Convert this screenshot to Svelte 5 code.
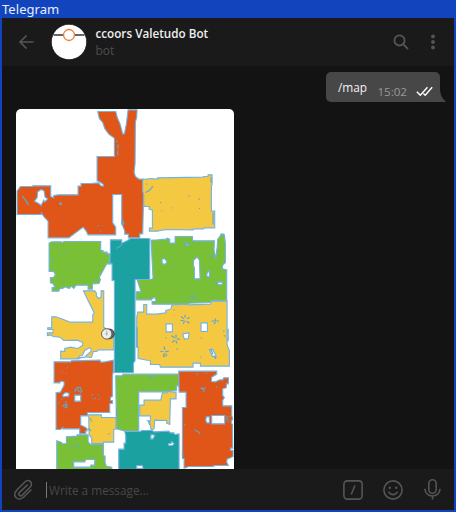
<script>
  // Every room is traced on a 3x grid whose corner sits at (ox, oy) of the window.
  const red = '#df5618', green = '#79c036', yellow = '#f5c842', teal = '#1aa1a0', white = '#fff';
  const rooms = [
    { ox: 10, oy: 170, fill: teal, d: 'M300 208H334V218L350 211 360 204H418V327H374V570L369 578V606H312V330H305V280H298V250H300Z' },
    { ox: 10, oy: 170, fill: red, d: 'M262-177H316L321-158 329-140 337-110H342L348-140 353-182H380L379-160 375-145 374-20 371 5 375 18 386 26H399V100L397 190H388V202H354V191H343V182L334 158V72H307V157L316 170V193H233L227 181 218 170 175 202H113V152L100 138 93 127V132H20V62L30 48H67V46H121V78L130 82V75L145 73H203V47H212V39H240L265 37 271 46 279 47 278 41 266 33 260 31V-42H312V-97L295-109 283-126 277-144 267-155ZM82 64 92 57 101 61 104 80 112 85 103 94 100 89 92 105 85 99 72 92 80 82Z' },
    { ox: 10, oy: 170, fill: green, d: 'M116 218 123 214H153L156 217 160 213H271V240H278V245H290V250H298V280H289L278 300 267 320 270 328 266 339 246 340V356H233V344H197L190 354 183 347 176 354 164 349 157 354 149 353 145 362H125V351H133L129 340 120 337V321H129L135 313 130 303H116Z' },
    { ox: 120, oy: 104, fill: yellow, d: 'M67 225 91 222 112 224V220L248 218 250 216H263V211H275V240L273 245V320H283V370H252L250 373H220L218 376 137 375 110 380H87V371H96V317L86 314V306H73L70 299V270L67 260Z' },
    { ox: 120, oy: 230, fill: green, d: 'M92 29 112 28 137 26 140 23 148 26V38H164V18H216L217 31H282L281 60 286 83 290 53 292 26 302 13H312L315 40V96L306 105V115L319 118V211H271V216L204 218V221H95V213H106V202H97L93 208H47V184H62L50 147H92L98 144Z' },
    { ox: 120, oy: 230, fill: yellow, d: 'M70 222H79V251H108L136 247V240L151 236 155 223 200 221 204 223 271 221V213L320 211V343L327 360V407H240V398H218V410H120L118 402H90V391L53 384V350H49V260L52 245H70Z' },
    { ox: 10, oy: 280, fill: yellow, d: 'M219 31H253L258 38V47L265 54 272 50V31H280V140L290 147 310 173V208H264L259 213H249L243 231 213 228 205 235H151V212L163 213V204L181 200 202 204 217 194V185L209 183 202 179 160 180 149 170 127 168 123 163 111 165V157H128V147H112V142H124V109H136L159 117 180 125H247V103L252 98 237 68Z' },
    { ox: 10, oy: 355, fill: red, d: 'M131 19H181L183 16 269 14 271 20 284 19 309 14V48L306 60V123L300 126V135H306V144H298V171H231V181H211V209L220 213 230 219V226H226V234H208V220H157V216L150 222H137V112L150 110 161 89V79L151 77 148 82H131Z' },
    { ox: 10, oy: 355, fill: yellow, d: 'M235 178H273V186H317V220L310 223V260H279V264H244V248L236 238Z' },
    { ox: 10, oy: 355, fill: green, d: 'M139 256 152 260 158 265 168 264V244L200 242V238H233V260L241 267 279 266 279 300 284 302V322L288 332 304 335V345H139Z' },
    { ox: 110, oy: 355, fill: green, d: 'M16 61H37V56H205V91H198V105L158 109H85V227H45L18 220Z' },
    { ox: 110, oy: 355, fill: yellow, d: 'M88 149H101V134H151L156 112H170V107L188 110H197V130L180 130 178 207 169 203V195L133 194 131 220 122 222 118 200 112 196H120V181H88Z' },
    { ox: 110, oy: 355, fill: teal, d: 'M43 228H90L94 225H126L130 229 175 227 180 232H190L193 237 206 235V345H25V281H41V263H46V240Z' },
    { ox: 110, oy: 355, fill: red, d: 'M205 47H319V56L304 65 303 78 315 79 328 73H337L340 67H354V85H348V96L337 100V120L342 126 337 134V151H364V180L367 190 362 201 366 207 367 278H360V284L368 285V303L350 311 349 320 354 330H310V333H235L221 338V309H216V156H227V110H206Z' },

    // Free-standing gaps inside the rooms
    { ox: 120, oy: 230, fill: white, d: 'M125 86 132 84 140 94 134 102 125 98ZM220 89 230 80 237 89 239 145H222V112L219 104ZM261 126 267 121V140L258 136ZM290 155 307 155 304 163 293 162ZM193 36 207 42 200 45ZM137 280H156V304H137ZM242 277H261V303H242ZM187 310 206 307 204 324 192 326ZM267 357 276 356 285 371 287 380 276 377Z' },
    { ox: 10, oy: 355, fill: white, d: 'M193 119H211V137H193ZM157 118 165 111 176 113 175 122 158 124ZM188 319H223L226 312H253V329H241V335H190V326Z' },
    { ox: 110, oy: 355, fill: white, d: 'M304 180H343V205H304ZM288 184H297V202H289L286 194ZM122 237 133 239 128 250H121ZM174 264H182L183 258 191 264 186 270H175ZM79 330H96L98 339H79Z' },
    { ox: 10, oy: 280, fill: white, d: 'M202 233 208 226 216 225 223 210 236 202 242 205V213L232 221 223 230Z' }
  ];

  // Thin outlines of furniture and scanning noise
  const traces = [
    { ox: 10, oy: 104, d: 'M319 108V113M323 120V133M322 138V153' },
    { ox: 10, oy: 170, d: 'M36 77 47 91 55 104M318 234 336 222M335 154H340V163M148 98H153V102H148ZM262 166H265M275 165H277M270 182H273M126 260V271M141 230V233M158 245 163 248M168 249H171M190 296H194M173 293V296M254 324H257M160 320V323' },
    { ox: 120, oy: 104, d: 'M75 264 87 258 98 245M77 239H80M119 294H123M204 274H208M234 284H238M236 312H239M156 310H158M123 319H125M278 325V360M272 218V235M300 389H310M5 350V362' },
    { ox: 120, oy: 230, d: 'M182 258 190 265M194 253V262M200 265 208 260M180 270H190M198 272 207 278M188 280 193 271M274 272H283M285 264V272M288 272 295 271M281 281 286 275M153 316 163 322M167 312V323M170 326H178M155 335 163 329M166 330 170 339M130 348 134 358M120 363H129M134 364 145 362M128 378 133 368M136 370 140 376M266 77H271M276 74 284 79M277 68H279M289 61H292M208 198H216M220 188V195M222 200 230 204M213 207 219 202M160 109H163M161 237V240M241 322H244M308 302H312M310 316H315M323 295V332M168 356H172M240 380H243M50 290V350M137 320V323M283 156 292 160M191 44 196 38M203 36V44M271 356 278 371' },
    { ox: 10, oy: 355, d: 'M194 110 195 102 201 96 210 97 214 106 210 112M200 103 208 109M155 152 163 148M168 137 165 148M165 150 173 147M160 157 168 153M169 151V159M144 143H147M153 132H156M243 118H247M254 128H257M262 118H265M264 131H267M248 131H251M171 36H173M154 49H157M166 54H169M182 271H188M203 269V277M195 274H200M241 188V195M244 198H247M295 233V237M233 220 242 226' },
    { ox: 110, oy: 355, d: 'M270 98 280 102M276 95 282 109M281 100 286 96M319 93V97M347 190H354M350 181V187M352 194V200M356 183H359M360 193V196M253 223 261 228M263 227 268 235M221 208H225M116 64 123 68 128 64M158 0 165 4M19 158V183M114 197 118 208M217 285V307M310 0 316 10M258 55 262 57M286 52 290 54' }
  ];
</script>

<main class="window">
  <div class="titlebar">Telegram</div>
  <div class="chat">
    <header>
      <svg class="back" width="16" height="16" viewBox="0 0 16 16"><path d="M15.5 8H2M8.5 1.5 2 8 8.5 14.5" /></svg>
      <svg class="avatar" width="36" height="36" viewBox="0 0 36 36">
        <circle cx="18" cy="18" r="17.7" fill="#fff" stroke="#0b0b0b" stroke-width=".7" />
        <path d="M2.5 11H33.5" stroke="#111" stroke-width="1.3" />
        <circle cx="18" cy="11" r="5.5" fill="#fff" stroke="#ef7d35" stroke-width="1.3" />
      </svg>
      <div class="who">
        <div class="name">ccoors Valetudo Bot</div>
        <div class="status">bot</div>
      </div>
      <svg class="search" width="16" height="16" viewBox="0 0 16 16"><circle cx="6.5" cy="6.4" r="5.1" /><path d="M10.2 10.2 15 15" /></svg>
      <svg class="more" width="4" height="16" viewBox="0 0 4 16"><circle cx="2" cy="2.4" r="1.9" /><circle cx="2" cy="8" r="1.9" /><circle cx="2" cy="13.5" r="1.9" /></svg>
    </header>

    <section class="messages">
      <div class="outgoing">
        <span class="text">/map</span>
        <span class="time">15:02</span>
        <svg class="checks" width="17" height="11" viewBox="0 0 17 11"><path d="M.8 5.7 4.3 9.3 11.5 1.2M7.4 7.5 9.2 9.3 16.2 1.2" /></svg>
        <svg class="tail" width="6" height="12" viewBox="0 0 6 12"><path d="M0 0Q.7 8 5.8 11.4L5.5 12H0Z" /></svg>
      </div>
      <div class="photo">
        <svg width="218" height="360" viewBox="15.6 108.5 218 360">
          {#each rooms as room}
            <g transform="translate({room.ox} {room.oy}) scale(.33333)">
              <path class="room" d={room.d} fill={room.fill} />
            </g>
          {/each}
          {#each traces as trace}
            <g transform="translate({trace.ox} {trace.oy}) scale(.33333)">
              <path class="trace" d={trace.d} />
            </g>
          {/each}
          <circle cx="109" cy="333.4" r="4.9" fill="#666" stroke="#333" stroke-width=".8" />
          <circle cx="106.3" cy="333.4" r="5.2" fill="#eee" stroke="#555" stroke-width=".9" />
          <path d="M106.3 330V335M105 333.4H107.6" stroke="#999" stroke-width=".7" />
        </svg>
      </div>
    </section>

    <footer>
      <svg class="clip" width="20" height="22" viewBox="0 0 20 22">
        <path d="M13.7 5.6 5.3 13.6C3.6 15.5 6.1 18 8 16.3L15.8 8.5C20.2 4 14.6-.8 10.6 3.2L3.1 10.7C-2.8 17.2 4.3 23.2 9.8 18L17.4 10.5" />
      </svg>
      <div class="input">Write a message...</div>
      <svg class="command" width="20" height="20" viewBox="0 0 20 20"><rect x=".9" y=".9" width="18.2" height="18.2" rx="3.3" /><path d="M8.2 14.5 12 5.5" /></svg>
      <svg class="smile" width="20" height="20" viewBox="0 0 20 20"><circle cx="10" cy="10" r="9.1" /><path d="M5.3 11.8Q10 17.5 14.7 11.8" /><circle class="dot" cx="6.8" cy="7.7" r="1.2" /><circle class="dot" cx="13.2" cy="7.7" r="1.2" /></svg>
      <svg class="mic" width="17" height="21" viewBox="0 0 17 21"><rect x="4.8" y=".8" width="7.4" height="13.5" rx="3.7" /><path d="M1 9.7C1 19.5 16 19.5 16 9.7M8.5 17V20.5" /></svg>
    </footer>
  </div>
</main>

<style>
  .window {
    box-sizing: border-box;
    width: 456px;
    height: 512px;
    padding: 0 2px 2px;
    display: flex;
    flex-direction: column;
    overflow: hidden;
    background: #1144bd;
    font-family: "Noto Sans", sans-serif;
  }
  svg { display: block; flex: none; }
  .titlebar {
    height: 18px;
    line-height: 19px;
    font-size: 13px;
    letter-spacing: .05px;
    color: #e8eefb;
  }
  .chat {
    flex: 1;
    min-height: 0;
    display: flex;
    flex-direction: column;
    background: #131313;
  }
  header {
    box-sizing: border-box;
    height: 48px;
    flex: none;
    display: flex;
    align-items: center;
    padding: 0 19.5px 0 16px;
    background: #1a1a1a;
  }
  .back, .search, .clip, .command, .smile, .mic {
    fill: none;
    stroke: #555;
    stroke-width: 1.6;
  }
  .avatar { margin-left: 17px; }
  .who {
    margin-left: 8.5px;
    flex: 1;
    white-space: nowrap;
  }
  .name {
    font: 600 11.7px/18px "Open Sans", sans-serif;
    color: #eee;
  }
  .status {
    font: 12px/18px "Open Sans", sans-serif;
    color: #4e4e4e;
  }
  .search { margin-right: 21.5px; stroke-width: 1.8; }
  .more { fill: #555; }
  .messages {
    flex: 1;
    min-height: 0;
    overflow: hidden;
    display: flex;
    flex-direction: column;
  }
  .outgoing {
    position: relative;
    box-sizing: border-box;
    width: 114px;
    height: 30px;
    flex: none;
    align-self: flex-end;
    margin: 6px 14px 7px 0;
    padding: 0 7px 0 12px;
    display: flex;
    align-items: center;
    background: #474747;
    border-radius: 5px 5px 0 5px;
    font: 11.8px/18px "Open Sans", sans-serif;
    color: #f2f2f2;
  }
  .text { margin-top: -1px; }
  .time {
    margin: 9px 9px 0 auto;
    font-size: 11.6px;
    color: #999;
  }
  .checks {
    margin-top: 9px;
    fill: none;
    stroke: #fff;
    stroke-width: 1.4;
  }
  .tail {
    position: absolute;
    left: 114px;
    bottom: 0;
    fill: #474747;
  }
  .photo {
    width: 218px;
    height: 360px;
    flex: none;
    margin-left: 14px;
    overflow: hidden;
    border-radius: 5px 5px 0 0;
    background: #fff;
  }
  .room { stroke: #72b3e2; stroke-width: 3.3; fill-rule: evenodd; }
  .trace { fill: none; stroke: #5fa8d0; stroke-width: 3.6; }
  footer {
    box-sizing: border-box;
    height: 41px;
    flex: none;
    display: flex;
    align-items: center;
    padding: 0 13px 0 12px;
    background: #1a1a1a;
  }
  .input {
    height: 16px;
    flex: 1;
    margin-left: 12px;
    padding-left: 2px;
    border-left: 1px solid #777;
    font: 11.8px/16px "Open Sans", sans-serif;
    color: #484848;
  }
  .dot { fill: #555; stroke: none; }
  .smile { margin: 0 21px 0 20px; }
</style>
